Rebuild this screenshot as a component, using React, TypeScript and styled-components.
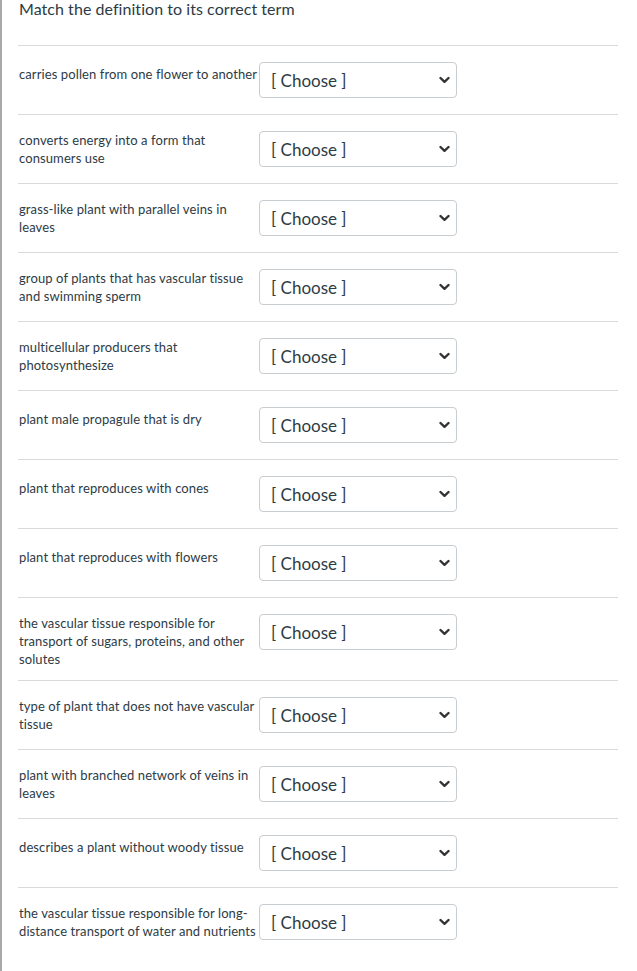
import React from "react";
import styled, { createGlobalStyle } from "styled-components";

const Global = createGlobalStyle`
  html, body { margin: 0; padding: 0; background: #fff; }
  body { font-family: Lato, "Open Sans", sans-serif; color: #2d3b45; }
`;

const Page = styled.div`
  border-left: 2px solid #a9a9a9;
  min-height: 971px;
  box-sizing: border-box;
  padding: 0 19px 0 16px;
`;

const Title = styled.h2`
  margin: 0;
  padding: 0 0 0 1px;
  height: 45px;
  font-size: 16px;
  line-height: 17px;
  font-weight: 400;
  letter-spacing: 0.05px;
  color: #2d3b45;
`;

const List = styled.div`
  border-top: 1px solid #d8dadc;
`;

const Row = styled.div`
  display: flex;
  align-items: flex-start;
  border-bottom: 1px solid #d8dadc;
  &:last-child { border-bottom: none; }
`;

const Label = styled.div`
  box-sizing: content-box;
  width: 240px;
  padding: 16px 0 12px 1px;
  min-height: 24px;
  display: flex;
  align-items: center;
  font-size: 13px;
  line-height: 18px;
  letter-spacing: 0.1px;
  color: #2d3b45;
`;

const SelectBox = styled.div`
  box-sizing: border-box;
  width: 198px;
  height: 36px;
  margin: 16px 0;
  border: 1px solid #c7cdd1;
  border-radius: 4px;
  background: #fff;
  display: flex;
  align-items: center;
  justify-content: space-between;
  padding: 0 6px 0 11px;
  font-size: 17px;
  color: #2d3b45;
`;

const Chevron = () => (
  <svg width="11" height="8" viewBox="0 0 11 8" aria-hidden>
    <path d="M1.5 2 L5.5 5.8 L9.5 2" fill="none" stroke="#333" strokeWidth="2.4" strokeLinecap="round" strokeLinejoin="round" />
  </svg>
);

const items = [
  "carries pollen from one flower to another",
  "converts energy into a form that consumers use",
  "grass-like plant with parallel veins in leaves",
  "group of plants that has vascular tissue and swimming sperm",
  "multicellular producers that photosynthesize",
  "plant male propagule that is dry",
  "plant that reproduces with cones",
  "plant that reproduces with flowers",
  "the vascular tissue responsible for transport of sugars, proteins, and other solutes",
  "type of plant that does not have vascular tissue",
  "plant with branched network of veins in leaves",
  "describes a plant without woody tissue",
  "the vascular tissue responsible for long-distance transport of water and nutrients",
];

export default function App() {
  return (
    <>
      <Global />
      <Page>
        <Title>Match the definition to its correct term</Title>
        <List>
          {items.map((t) => (
            <Row key={t}>
              <Label>{t}</Label>
              <SelectBox>
                <span>[ Choose ]</span>
                <Chevron />
              </SelectBox>
            </Row>
          ))}
        </List>
      </Page>
    </>
  );
}
